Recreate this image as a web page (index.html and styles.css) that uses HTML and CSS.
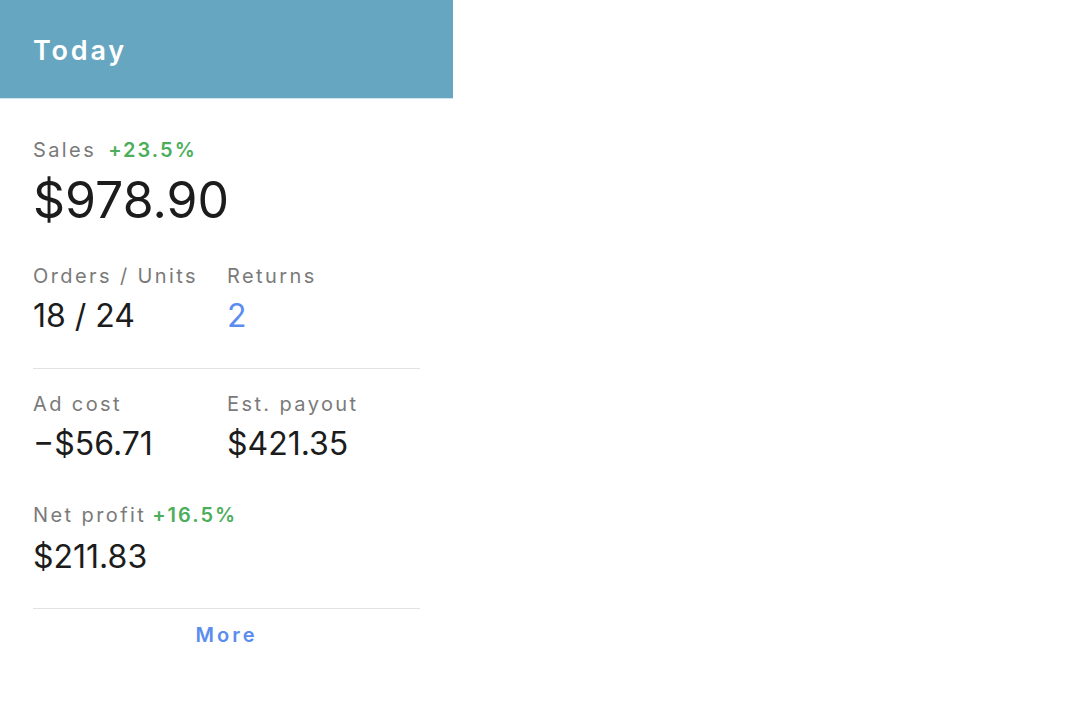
FILE: index.html
```html
<!DOCTYPE html>
<html lang="en">
<head>
<meta charset="utf-8">
<title>Today</title>
<link rel="stylesheet" href="styles.css">
</head>
<body>
<section class="card">
  <header class="card-head">
    <h1 class="card-title">Today</h1>
  </header>
  <div class="card-body">
    <div class="stat stat-main">
      <div class="label">Sales <span class="delta">+23.5%</span></div>
      <div class="value value-big">$978.90</div>
    </div>
    <div class="row row-first">
      <div class="stat">
        <div class="label">Orders / Units</div>
        <div class="value">18 / 24</div>
      </div>
      <div class="stat">
        <div class="label">Returns</div>
        <div class="value value-link">2</div>
      </div>
    </div>
    <hr class="divider divider-top">
    <div class="row row-costs">
      <div class="stat">
        <div class="label">Ad cost</div>
        <div class="value">&minus;$56.71</div>
      </div>
      <div class="stat">
        <div class="label">Est. payout</div>
        <div class="value">$421.35</div>
      </div>
    </div>
    <div class="stat stat-profit">
      <div class="label">Net profit <span class="delta delta-tight">+16.5%</span></div>
      <div class="value">$211.83</div>
    </div>
    <hr class="divider divider-bottom">
    <div class="more">More</div>
  </div>
</section>
</body>
</html>
```

FILE: styles.css
```css
* { box-sizing: border-box; }

body {
  margin: 0;
  background: #ffffff;
  font-family: Inter, "Open Sans", "Liberation Sans", sans-serif;
  color: #1c1c1c;
}

.card {
  width: 453px;
}

.card-head {
  height: 99px;
  background: #67a6c0;
  border-bottom: 1px solid #cfe4ee;
  display: flex;
  align-items: center;
  padding: 4px 33px 0;
}

.card-title {
  margin: 0;
  font-size: 27px;
  font-weight: 600;
  letter-spacing: 2.8px;
  color: #ffffff;
  line-height: 34px;
}

.card-body {
  padding: 37px 33px 0;
}

.label {
  font-size: 20px;
  line-height: 28px;
  letter-spacing: 2.4px;
  color: #7a7a7a;
}

.delta {
  color: #4cae5a;
  font-weight: 600;
  letter-spacing: 2px;
  margin-left: 4px;
}

.delta-tight {
  margin-left: -2px;
}

.value {
  font-size: 32px;
  line-height: 40px;
  margin-top: 6px;
  color: #1c1c1c;
}

.value-big {
  font-size: 50px;
  line-height: 56px;
  margin-top: 8px;
}

.value-link {
  color: #5b8def;
}

.row {
  display: grid;
  grid-template-columns: 194px 1fr;
}

.row-first {
  margin-top: 34px;
}

.divider {
  border: 0;
  height: 1px;
  background: #e2e2e2;
  margin: 0;
}

.divider-top {
  margin-top: 32px;
}

.row-costs {
  margin-top: 21px;
}

.stat-profit {
  margin-top: 37px;
}

.stat-profit .value {
  margin-top: 8px;
}

.divider-bottom {
  margin-top: 31px;
}

.more {
  margin-top: 12px;
  text-align: center;
  font-size: 20px;
  line-height: 28px;
  font-weight: 600;
  letter-spacing: 3px;
  color: #5b8def;
}
```
